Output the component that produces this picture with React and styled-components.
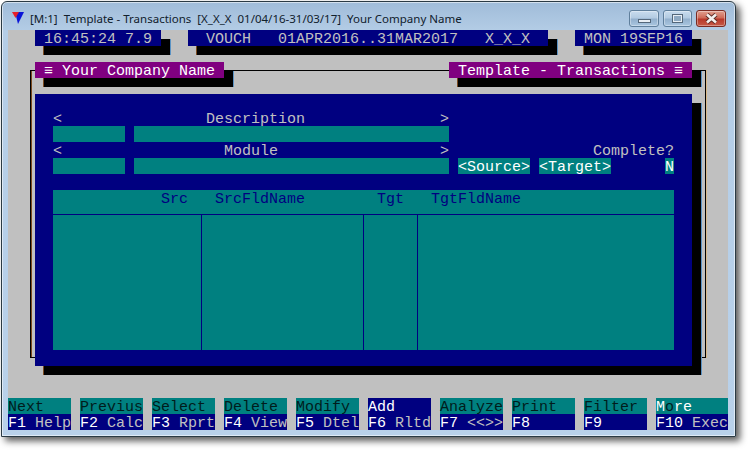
import React from 'react';
import styled, { createGlobalStyle } from 'styled-components';

const Global = createGlobalStyle`
  html, body { margin: 0; padding: 0; background: #fff; width: 748px; height: 450px; overflow: hidden; }
`;

const NAVY = '#000080';
const TEAL = '#008080';
const PURPLE = '#800080';
const GREY = '#c0c0c0';

const Win = styled.div`
  box-sizing: border-box;
  width: 735px;
  height: 436px;
  margin: 1px 0 0 1px;
  border: 1px solid #2a3a44;
  border-radius: 6px 6px 0 0;
  padding: 0 6px 6px 6px;
  background: linear-gradient(180deg, #a0bcd9 0, #b4cde6 30px, #b9d1ea 100%);
  box-shadow: inset 0 0 0 1px rgba(255,255,255,.55), 4px 4px 7px rgba(0,0,0,.65);
`;

const TitleBar = styled.div`
  height: 28px;
  display: flex;
  align-items: center;
  position: relative;
`;

const AppIcon = styled.svg`
  width: 12px;
  height: 12px;
  margin: 4px 6px 0 4px;
  flex: none;
`;

const TitleText = styled.span`
  font: 11.5px/16px "Noto Sans", "Open Sans", sans-serif;
  color: #10202c;
  white-space: pre;
  flex: 1;
  margin-top: 6px;
`;

const Controls = styled.div`
  display: flex;
  gap: 4px;
  margin: 5px 3px 0 0;
`;

const Ctl = styled.div`
  width: ${p => p.$w || 30}px;
  height: 17px;
  box-sizing: border-box;
  border: 1px solid ${p => (p.$close ? '#7a2a22' : '#5f7f9c')};
  border-radius: 3px;
  display: flex;
  align-items: center;
  justify-content: center;
  background: ${p => p.$close
    ? 'linear-gradient(180deg,#e0a090 0,#cf6a58 45%,#b8382a 55%,#c65a48 100%)'
    : 'linear-gradient(180deg,#c9dcee 0,#b3cbe2 45%,#93b0cd 55%,#a9c6e0 100%)'};
  box-shadow: inset 0 0 0 1px rgba(255,255,255,.35);
`;

const MinGlyph = styled.div`
  width: 13px;
  height: 4px;
  margin-top: 5px;
  box-sizing: border-box;
  background: #e8eef4;
  border: 1px solid #54677a;
`;

const MaxGlyph = styled.div`
  width: 11px;
  height: 9px;
  box-sizing: border-box;
  border: 2px solid #e8eef4;
  outline: 1px solid #54677a;
  outline-offset: -1px;
  background: #8fa9c2;
`;

const CloseGlyph = styled.svg`
  width: 15px;
  height: 11px;
`;

const Screen = styled.div`
  width: 720px;
  height: 400px;
  background: ${GREY};
  display: flex;
  flex-direction: column;
  font: 15px/20px "Liberation Mono", monospace;
  color: ${GREY};
  white-space: pre;
`;

const StatusBar = styled.div`
  display: flex;
  gap: 27px;
  padding-left: 27px;
`;

const shadow = `box-shadow: 9px 9px 0 #000, 10px 9px 0 #5b93c4, 8px 9px 0 #7a4a20;`;

const StatusBox = styled.div`
  width: ${p => p.$cols * 9}px;
  height: 16px;
  background: ${NAVY};
  ${shadow}
`;

const Dialog = styled.div`
  position: relative;
  isolation: isolate;
  width: 657px;
  height: 304px;
  margin: 16px 0 0 27px;
  &::before {
    content: '';
    position: absolute;
    z-index: -1;
    left: -5px;
    right: -14px;
    top: 8px;
    bottom: 8px;
    border: 1px solid #000;
    box-shadow: 1px 0 0 #d8b888, inset 1px 0 0 #7a4a20;
  }
`;

const TitleRow = styled.div`
  display: flex;
  justify-content: space-between;
`;

const TitleTab = styled.div`
  height: 16px;
  width: ${p => p.$cols * 9}px;
  background: ${PURPLE};
  color: #fff;
  ${shadow}
`;

const Panel = styled.div`
  margin-top: 16px;
  height: 272px;
  box-sizing: border-box;
  background: ${NAVY};
  padding: 16px 18px;
  ${shadow}
`;

const FormRow = styled.div`
  display: flex;
  height: 16px;
`;

const Spacer = styled.div`
  flex: 1;
`;

const Field = styled.div`
  width: ${p => p.$cols * 9}px;
  height: 16px;
  background: ${TEAL};
  color: #fff;
  margin-right: ${p => (p.$gap ?? 1) * 9}px;
`;

const Table = styled.div`
  margin-top: 16px;
  width: 621px;
  height: 160px;
  background: ${TEAL};
  display: flex;
  flex-direction: column;
`;

const TableHead = styled.div`
  height: 24px;
  color: ${NAVY};
  border-bottom: 1px solid ${NAVY};
`;

const TableBody = styled.div`
  flex: 1;
  display: flex;
`;

const Col = styled.div`
  width: ${p => (p.$w ? `${p.$w}px` : 'auto')};
  flex: ${p => (p.$w ? 'none' : 1)};
  border-right: ${p => (p.$w ? `1px solid ${NAVY}` : 'none')};
`;

const Keys = styled.div`
  margin-top: auto;
  display: flex;
  gap: 9px;
`;

const Key = styled.div`
  width: ${p => p.$cols * 9}px;
  display: flex;
  flex-direction: column;
`;

const KeyLabel = styled.div`
  height: 16px;
  background: ${p => (p.$active ? NAVY : TEAL)};
  color: ${p => (p.$active ? '#fff' : '#001c1c')};
`;

const KeyFn = styled.div`
  height: 16px;
  background: ${NAVY};
  color: ${GREY};
`;

const Hot = styled.span`
  color: #fff;
`;

const Dark = styled.span`
  color: #001c1c;
`;

const keys = [
  ['Next', 'F1', ' Help'],
  ['Previus', 'F2', ' Calc'],
  ['Select', 'F3', ' Rprt'],
  ['Delete', 'F4', ' View'],
  ['Modify', 'F5', ' Dtel'],
  ['Add', 'F6', ' Rltd', true],
  ['Analyze', 'F7', ' <<>>'],
  ['Print', 'F8', ''],
  ['Filter', 'F9', ''],
];

export default function App() {
  return (
    <>
      <Global />
      <Win>
        <TitleBar>
          <AppIcon viewBox="0 0 12 12">
            <polygon points="3,0 12,0 6,12" fill="#0a14d8" />
            <polygon points="0,0 7,0 3.5,6" fill="#e8202a" />
          </AppIcon>
          <TitleText>[M:1]  Template - Transactions  [X_X_X  01/04/16-31/03/17]  Your Company Name</TitleText>
          <Controls>
            <Ctl><MinGlyph /></Ctl>
            <Ctl $w={29}><MaxGlyph /></Ctl>
            <Ctl $close>
              <CloseGlyph viewBox="0 0 15 11">
                <path d="M3 1.5 L12 9.5 M12 1.5 L3 9.5" stroke="#5a2a24" strokeWidth="4.4" />
                <path d="M3 1.5 L12 9.5 M12 1.5 L3 9.5" stroke="#f4f0ee" strokeWidth="2.6" />
              </CloseGlyph>
            </Ctl>
          </Controls>
        </TitleBar>
        <Screen>
          <StatusBar>
            <StatusBox $cols={14}> 16:45:24 7.9</StatusBox>
            <StatusBox $cols={40}>  VOUCH   01APR2016..31MAR2017   X_X_X</StatusBox>
            <StatusBox $cols={13}> MON 19SEP16</StatusBox>
          </StatusBar>
          <Dialog>
            <TitleRow>
              <TitleTab $cols={21}> ≡ Your Company Name</TitleTab>
              <TitleTab $cols={27}> Template - Transactions ≡</TitleTab>
            </TitleRow>
            <Panel>
              <FormRow>{'<                Description               >'}</FormRow>
              <FormRow>
                <Field $cols={8} />
                <Field $cols={35} />
              </FormRow>
              <FormRow>
                {'<                  Module                  >'}
                <Spacer />
                Complete?
              </FormRow>
              <FormRow>
                <Field $cols={8} />
                <Field $cols={35} />
                <Field $cols={8}>{'<Source>'}</Field>
                <Field $cols={8} $gap={6}>{'<Target>'}</Field>
                <Field $cols={1} $gap={0}>N</Field>
              </FormRow>
              <Table>
                <TableHead>{'            Src   SrcFldName        Tgt   TgtFldName'}</TableHead>
                <TableBody>
                  <Col $w={148} />
                  <Col $w={161} />
                  <Col $w={53} />
                  <Col />
                </TableBody>
              </Table>
            </Panel>
          </Dialog>
          <Keys>
            {keys.map(([label, fn, text, active]) => (
              <Key $cols={7} key={fn}>
                <KeyLabel $active={active}>{label}</KeyLabel>
                <KeyFn><Hot>{fn}</Hot>{text}</KeyFn>
              </Key>
            ))}
            <Key $cols={8}>
              <KeyLabel><Hot>M</Hot><Dark>o</Dark><Hot>re</Hot></KeyLabel>
              <KeyFn><Hot>F10</Hot> Exec</KeyFn>
            </Key>
          </Keys>
        </Screen>
      </Win>
    </>
  );
}
